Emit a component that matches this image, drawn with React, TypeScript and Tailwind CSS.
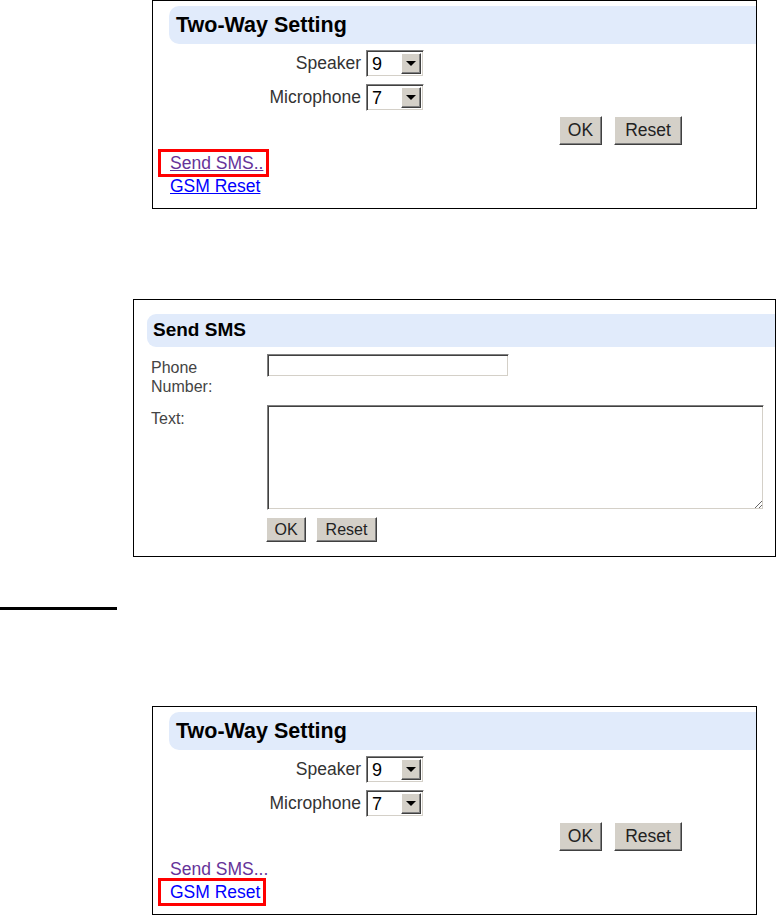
const font = { fontFamily: '"Liberation Sans", Arial, sans-serif' };

const raised =
  "bg-[#d4d0c8] border border-t-white border-l-white border-b-[#404040] border-r-[#404040] shadow-[inset_-1px_-1px_0_#808080]";
const sunken =
  "bg-white border border-t-[#808080] border-l-[#808080] border-b-white border-r-white shadow-[inset_1px_1px_0_#404040,inset_-1px_-1px_0_#d4d0c8]";

function Select({ value }: { value: string }) {
  return (
    <div className={`${sunken} flex w-[58px] h-[27px] p-[2px]`}>
      <div className="flex-1 pl-[3px] text-[18px] leading-[22px] text-black">{value}</div>
      <div className={`${raised} w-[20px] flex items-center justify-center`}>
        <div className="w-0 h-0 border-l-[5px] border-r-[5px] border-t-[5px] border-l-transparent border-r-transparent border-t-black" />
      </div>
    </div>
  );
}

function Btn({ label, w, h, size }: { label: string; w: string; h: string; size: string }) {
  return (
    <button className={`${raised} ${w} ${h} ${size} flex items-center justify-center text-[#222]`} style={font}>
      {label}
    </button>
  );
}

function Marked({ on, children }: { on: boolean; children: React.ReactNode }) {
  return (
    <div className="relative w-fit">
      {children}
      {on && <span className="absolute -left-[12px] -right-[6px] -top-[3px] -bottom-[2px] border-[3px] border-[#ff0000]" />}
    </div>
  );
}

function TwoWay({ mark }: { mark: "sms" | "gsm" }) {
  const under = mark === "sms";
  return (
    <div className="ml-[152px] w-[605px] h-[209px] border border-black pl-[16px] pt-[5px]">
      <div className="h-[38px] bg-[#e1ebfb] rounded-l-[10px] flex items-center pl-[7px] text-[21.5px] font-bold text-black">
        Two-Way Setting
      </div>
      <div className="mt-[6px] flex flex-col gap-[7px] text-[17.5px] text-[#333]">
        {[
          ["Speaker", "9"],
          ["Microphone", "7"],
        ].map(([l, v]) => (
          <div key={l} className="flex items-center">
            <div className="w-[197px] text-right pr-[5px]">{l}</div>
            <Select value={v} />
          </div>
        ))}
      </div>
      <div className="mt-[5px] flex gap-[12px] ml-[390px]">
        <Btn label="OK" w="w-[43px]" h="h-[29px]" size="text-[17.5px]" />
        <Btn label="Reset" w="w-[68px]" h="h-[29px]" size="text-[17.5px]" />
      </div>
      <div className="mt-[7px] pl-[1px] text-[17.5px] leading-[23px]">
        <Marked on={mark === "sms"}>
          <a className={`text-[#663399] ${under ? "underline" : ""}`}>{under ? "Send SMS.." : "Send SMS..."}</a>
        </Marked>
        <Marked on={mark === "gsm"}>
          <a className={`text-[#0000ff] ${under ? "underline" : ""}`}>GSM Reset</a>
        </Marked>
      </div>
    </div>
  );
}

function SendSms() {
  return (
    <div className="mt-[90px] ml-[133px] w-[643px] h-[258px] border border-black pl-[13px] pt-[14px]">
      <div className="h-[33px] bg-[#e1ebfb] rounded-l-[9px] flex items-center pl-[6px] text-[19px] font-bold text-black">
        Send SMS
      </div>
      <div className="mt-[7px] flex items-start text-[16px] leading-[19px] text-[#444]">
        <div className="w-[120px] pl-[4px] mt-[4px]">
          Phone
          <br />
          Number:
        </div>
        <input className={`${sunken} w-[242px] h-[23px] outline-none`} />
      </div>
      <div className="mt-[9px] flex items-start text-[16px] leading-[19px] text-[#444]">
        <div className="w-[120px] pl-[4px] mt-[4px]">Text:</div>
        <textarea className={`${sunken} w-[497px] h-[105px] outline-none`} />
      </div>
      <div className="mt-[7px] ml-[119px] flex gap-[10px]">
        <Btn label="OK" w="w-[40px]" h="h-[25px]" size="text-[16px]" />
        <Btn label="Reset" w="w-[61px]" h="h-[25px]" size="text-[16px]" />
      </div>
    </div>
  );
}

export default function App() {
  return (
    <div className="w-[776px] h-[915px] bg-white overflow-hidden" style={font}>
      <TwoWay mark="sms" />
      <SendSms />
      <div className="mt-[50px] w-[117px] h-[3px] bg-black" />
      <div className="mt-[96px]">
        <TwoWay mark="gsm" />
      </div>
    </div>
  );
}
